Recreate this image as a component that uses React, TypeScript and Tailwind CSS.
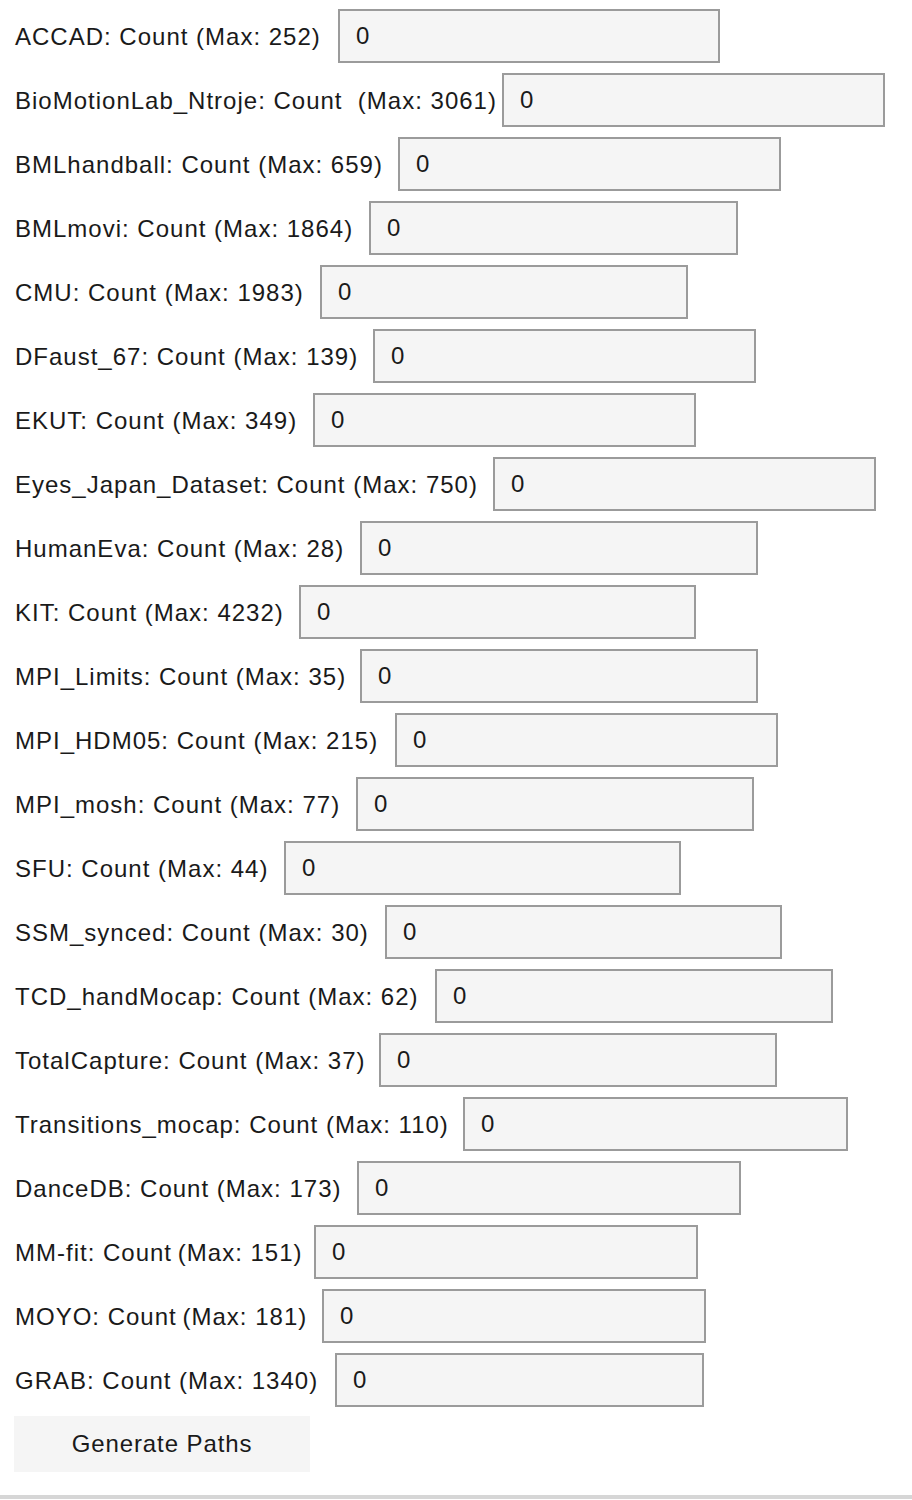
import { useState } from "react";

type Row = { name: string; max: number; label: string; input: string; sep?: string };

// 各行のラベル幅と入力欄の幅（スクリーンショットに合わせる）
const rows: Row[] = [
    { name: "ACCAD: Count", max: 252, label: "w-[323px]", input: "w-[382px]" },
    { name: "BioMotionLab_Ntroje: Count ", max: 3061, label: "w-[487px]", input: "w-[383px]" },
    { name: "BMLhandball: Count", max: 659, label: "w-[383px]", input: "w-[383px]" },
    { name: "BMLmovi: Count", max: 1864, label: "w-[354px]", input: "w-[369px]" },
    { name: "CMU: Count", max: 1983, label: "w-[305px]", input: "w-[368px]" },
    { name: "DFaust_67: Count", max: 139, label: "w-[358px]", input: "w-[383px]" },
    { name: "EKUT: Count", max: 349, label: "w-[298px]", input: "w-[383px]" },
    { name: "Eyes_Japan_Dataset: Count", max: 750, label: "w-[478px]", input: "w-[383px]" },
    { name: "HumanEva: Count", max: 28, label: "w-[345px]", input: "w-[398px]" },
    { name: "KIT: Count", max: 4232, label: "w-[284px]", input: "w-[397px]" },
    { name: "MPI_Limits: Count", max: 35, label: "w-[345px]", input: "w-[398px]" },
    { name: "MPI_HDM05: Count", max: 215, label: "w-[380px]", input: "w-[383px]" },
    { name: "MPI_mosh: Count", max: 77, label: "w-[341px]", input: "w-[398px]" },
    { name: "SFU: Count", max: 44, label: "w-[269px]", input: "w-[397px]" },
    { name: "SSM_synced: Count", max: 30, label: "w-[370px]", input: "w-[397px]" },
    { name: "TCD_handMocap: Count", max: 62, label: "w-[420px]", input: "w-[398px]" },
    { name: "TotalCapture: Count", max: 37, label: "w-[364px]", input: "w-[398px]" },
    { name: "Transitions_mocap: Count", max: 110, label: "w-[448px]", input: "w-[385px]" },
    { name: "DanceDB: Count", max: 173, label: "w-[342px]", input: "w-[384px]" },
    { name: "MM-fit: Count", max: 151, label: "w-[299px]", input: "w-[384px]", sep: "\u2009" },
    { name: "MOYO: Count", max: 181, label: "w-[307px]", input: "w-[384px]", sep: "\u2009" },
    { name: "GRAB: Count", max: 1340, label: "w-[320px]", input: "w-[369px]" },
];

export default function App() {
    const [counts, setCounts] = useState<string[]>(rows.map(() => "0"));

    return (
        <div className="min-h-[1500px] bg-white text-[#1a1a1a] font-['Liberation_Sans',Arial,sans-serif] flex flex-col">
            <div className="flex flex-col gap-[10px] pt-[9px] pl-[15px]">
                {rows.map((r, i) => (
                    <div key={r.name} className="flex items-center">
                        <label className={`${r.label} shrink-0 whitespace-pre text-[24px] tracking-[1px] leading-none pt-[2px]`}>
                            {r.name}
                            {r.sep ?? " "}
                            (Max: {r.max})
                        </label>
                        <input
                            type="text"
                            value={counts[i]}
                            onChange={(e) => {
                                const next = [...counts];
                                next[i] = e.target.value;
                                setCounts(next);
                            }}
                            className={`${r.input} h-[54px] shrink-0 border-2 border-[#9b9b9b] bg-[#f5f5f5] pl-[16px] text-[24px] text-[#1a1a1a] outline-none`}
                        />
                    </div>
                ))}
            </div>
            <div className="pl-[14px] pt-[9px]">
                <button className="w-[296px] h-[56px] bg-[#f5f5f5] text-[24px] tracking-[0.9px] text-[#1a1a1a]">
                    Generate Paths
                </button>
            </div>
            <div className="mt-[23px] h-[4px] bg-[#d6d6d6]" />
        </div>
    );
}
